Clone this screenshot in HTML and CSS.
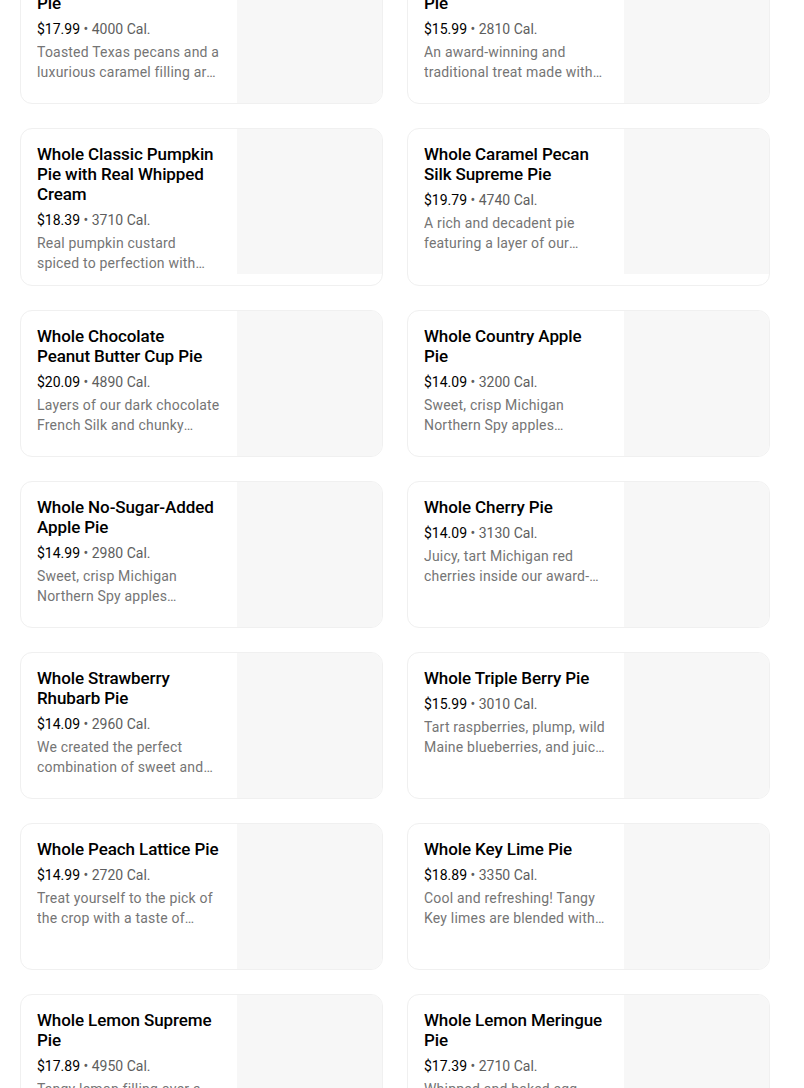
FILE: index.html
```html
<!DOCTYPE html>
<html lang="en">
<head>
    <meta charset="UTF-8">
    <meta name="viewport" content="width=device-width, initial-scale=1.0">
    <title>Whole Pies</title>
    <link rel="stylesheet" href="styles.css">
</head>
<body>
    <div class="menu">
        <div class="item">
            <div class="info">
                <h3 class="name">Whole Bourbon Pecan Pie</h3>
                <div class="meta"><span class="price">$17.99</span> • 4000 Cal.</div>
                <p class="desc">Toasted Texas pecans and a luxurious caramel filling are baked in our flaky, all-butter crust.</p>
            </div>
            <div class="photo"></div>
        </div>
        <div class="item">
            <div class="info">
                <h3 class="name">Whole Caramel Apple Pie</h3>
                <div class="meta"><span class="price">$15.99</span> • 2810 Cal.</div>
                <p class="desc">An award-winning and traditional treat made with crisp apples and a buttery crumb topping.</p>
            </div>
            <div class="photo"></div>
        </div>

        <div class="item">
            <div class="info">
                <h3 class="name">Whole Classic Pumpkin Pie with Real Whipped Cream</h3>
                <div class="meta"><span class="price">$18.39</span> • 3710 Cal.</div>
                <p class="desc">Real pumpkin custard spiced to perfection with cinnamon, nutmeg and ginger, topped with real whipped cream.</p>
            </div>
            <div class="photo"></div>
        </div>
        <div class="item">
            <div class="info">
                <h3 class="name">Whole Caramel Pecan Silk Supreme Pie</h3>
                <div class="meta"><span class="price">$19.79</span> • 4740 Cal.</div>
                <p class="desc">A rich and decadent pie featuring a layer of our famous French Silk and caramel pecan filling.</p>
            </div>
            <div class="photo"></div>
        </div>

        <div class="item">
            <div class="info">
                <h3 class="name">Whole Chocolate Peanut Butter Cup Pie</h3>
                <div class="meta"><span class="price">$20.09</span> • 4890 Cal.</div>
                <p class="desc">Layers of our dark chocolate French Silk and chunky peanut butter cups in a chocolate crust.</p>
            </div>
            <div class="photo"></div>
        </div>
        <div class="item">
            <div class="info">
                <h3 class="name">Whole Country Apple Pie</h3>
                <div class="meta"><span class="price">$14.09</span> • 3200 Cal.</div>
                <p class="desc">Sweet, crisp Michigan Northern Spy apples generously piled into our flaky double crust.</p>
            </div>
            <div class="photo"></div>
        </div>

        <div class="item">
            <div class="info">
                <h3 class="name">Whole No-Sugar-Added Apple Pie</h3>
                <div class="meta"><span class="price">$14.99</span> • 2980 Cal.</div>
                <p class="desc">Sweet, crisp Michigan Northern Spy apples sweetened naturally, baked in a flaky crust.</p>
            </div>
            <div class="photo"></div>
        </div>
        <div class="item">
            <div class="info">
                <h3 class="name">Whole Cherry Pie</h3>
                <div class="meta"><span class="price">$14.09</span> • 3130 Cal.</div>
                <p class="desc">Juicy, tart Michigan red cherries inside our award-winning flaky crust.</p>
            </div>
            <div class="photo"></div>
        </div>

        <div class="item">
            <div class="info">
                <h3 class="name">Whole Strawberry Rhubarb Pie</h3>
                <div class="meta"><span class="price">$14.09</span> • 2960 Cal.</div>
                <p class="desc">We created the perfect combination of sweet and tart with fresh strawberries and rhubarb.</p>
            </div>
            <div class="photo"></div>
        </div>
        <div class="item">
            <div class="info">
                <h3 class="name">Whole Triple Berry Pie</h3>
                <div class="meta"><span class="price">$15.99</span> • 3010 Cal.</div>
                <p class="desc">Tart raspberries, plump, wild Maine blueberries, and juicy blackberries in a flaky crust.</p>
            </div>
            <div class="photo"></div>
        </div>

        <div class="item">
            <div class="info">
                <h3 class="name">Whole Peach Lattice Pie</h3>
                <div class="meta"><span class="price">$14.99</span> • 2720 Cal.</div>
                <p class="desc">Treat yourself to the pick of the crop with a taste of sweet, juicy peaches under a lattice crust.</p>
            </div>
            <div class="photo"></div>
        </div>
        <div class="item">
            <div class="info">
                <h3 class="name">Whole Key Lime Pie</h3>
                <div class="meta"><span class="price">$18.89</span> • 3350 Cal.</div>
                <p class="desc">Cool and refreshing! Tangy Key limes are blended with sweetened condensed milk in a graham crust.</p>
            </div>
            <div class="photo"></div>
        </div>

        <div class="item">
            <div class="info">
                <h3 class="name">Whole Lemon Supreme Pie</h3>
                <div class="meta"><span class="price">$17.89</span> • 4950 Cal.</div>
                <p class="desc">Tangy lemon filling over a layer of sweet cream cheese in a flaky crust.</p>
            </div>
            <div class="photo"></div>
        </div>
        <div class="item">
            <div class="info">
                <h3 class="name">Whole Lemon Meringue Pie</h3>
                <div class="meta"><span class="price">$17.39</span> • 2710 Cal.</div>
                <p class="desc">Whipped and baked egg whites crown a tangy lemon filling in our flaky crust.</p>
            </div>
            <div class="photo"></div>
        </div>
    </div>
</body>
</html>
```

FILE: styles.css
```css
body {
    margin: 0;
    font-family: Roboto, "Noto Sans", sans-serif;
    color: #000;
    background: #fff;
}
.menu {
    display: grid;
    grid-template-columns: 363px 363px;
    gap: 24px;
    padding: 0 20px;
    margin-top: -43px;
}
.item {
    display: flex;
    align-items: flex-start;
    border: 1px solid #f0f0f0;
    border-radius: 12px;
    overflow: hidden;
    min-height: 145px;
}
.info {
    flex: 1;
    min-width: 0;
    padding: 15px 16px 12px;
}
.name {
    margin: 0;
    font-size: 17px;
    font-weight: 500;
    line-height: 20px;
    letter-spacing: -0.1px;
}
.meta {
    margin-top: 6px;
    font-size: 14px;
    line-height: 20px;
    color: #5e5e5e;
}
.price {
    color: #000;
}
.desc {
    margin: 3px 0 0;
    font-size: 14px;
    line-height: 20px;
    letter-spacing: 0.2px;
    color: #757575;
    display: -webkit-box;
    -webkit-line-clamp: 2;
    -webkit-box-orient: vertical;
    overflow: hidden;
}
.photo {
    flex: none;
    width: 145px;
    height: 145px;
    background: #f7f7f7;
}
```
